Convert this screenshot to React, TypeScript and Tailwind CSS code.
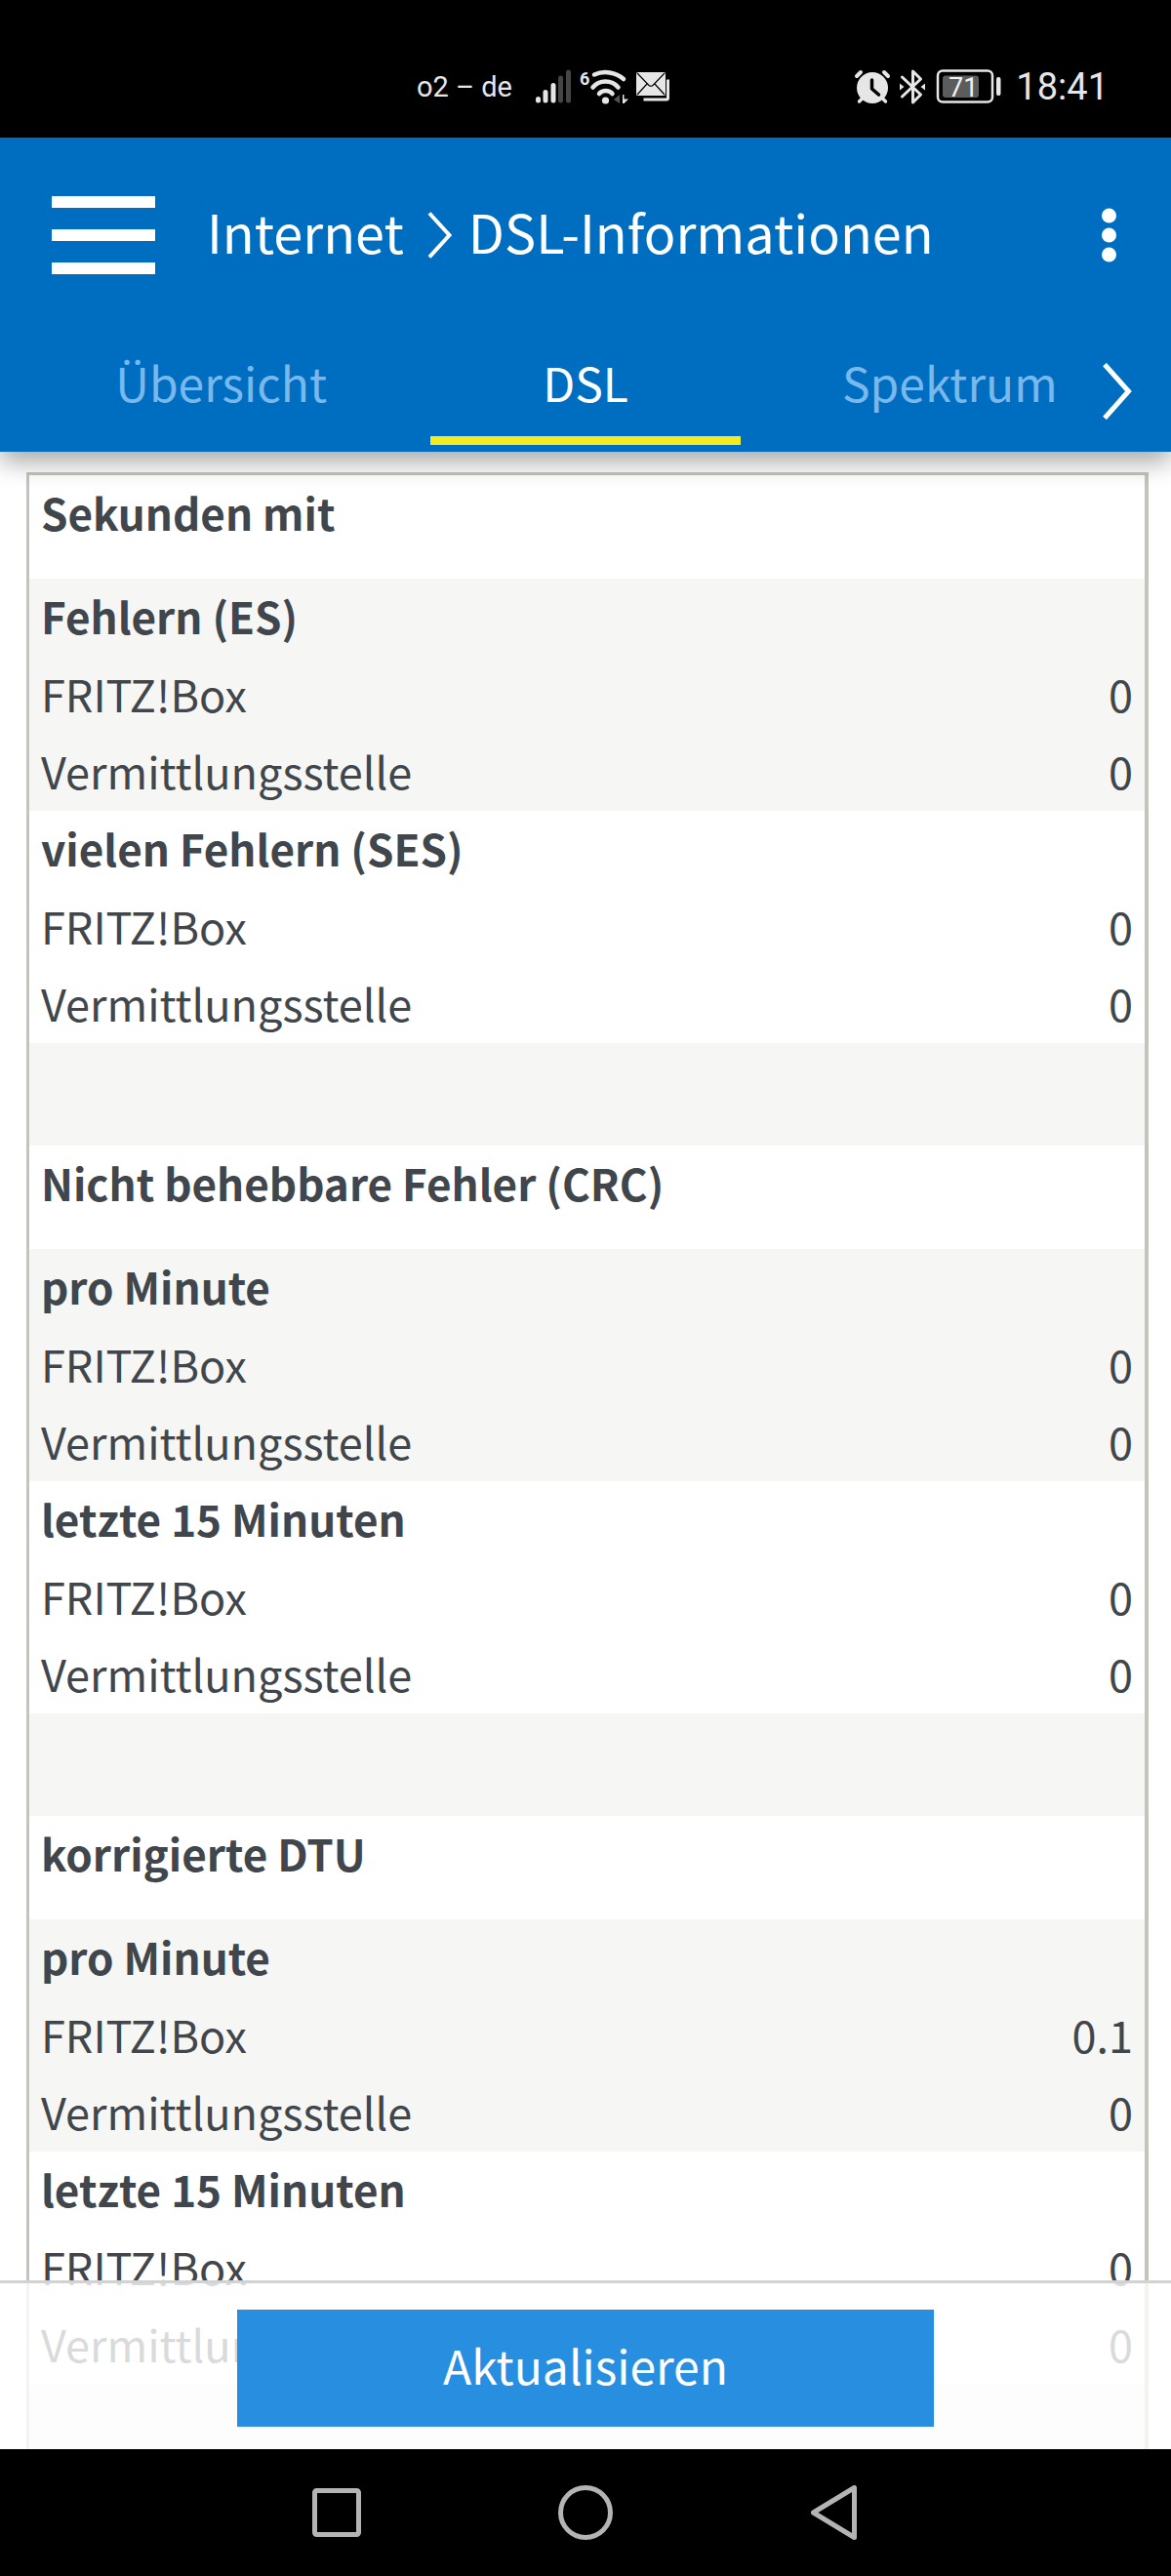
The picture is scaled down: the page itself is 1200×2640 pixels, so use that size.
import React from 'react';

const sections = [
  {
    title: 'Sekunden mit',
    groups: [
      { name: 'Fehlern (ES)', box: '0', exchange: '0' },
      { name: 'vielen Fehlern (SES)', box: '0', exchange: '0' },
    ],
  },
  {
    title: 'Nicht behebbare Fehler (CRC)',
    groups: [
      { name: 'pro Minute', box: '0', exchange: '0' },
      { name: 'letzte 15 Minuten', box: '0', exchange: '0' },
    ],
  },
  {
    title: 'korrigierte DTU',
    groups: [
      { name: 'pro Minute', box: '0.1', exchange: '0' },
      { name: 'letzte 15 Minuten', box: '0', exchange: '0' },
    ],
  },
];

const tabs = ['Übersicht', 'DSL', 'Spektrum'];

function StatusBar() {
  return (
    <div className="flex h-[141px] shrink-0 items-center justify-between bg-black pt-[37px] pr-16 pl-[427px] font-['Roboto',sans-serif] text-[#e6e6e6]">
      <div className="flex items-center">
        <span className="w-[121px] text-[29px] leading-[38px]">o2 – de</span>
        {/* signal strength */}
        <svg viewBox="0 0 38 38" className="mr-2 h-[38px] w-[38px]" strokeWidth="5" strokeLinecap="round">
          <g stroke="#e6e6e6">
            <path d="M3.5 31.5V33" />
            <path d="M11 24.5V33" />
            <path d="M19 17.5V33" />
          </g>
          <g stroke="#454545">
            <path d="M26.5 10V33" />
            <path d="M34.5 4V33" />
          </g>
        </svg>
        {/* wifi 6 */}
        <svg viewBox="0 0 51 38" className="mr-1.5 h-[38px] w-[51px] overflow-visible" fill="none">
          <text x="0" y="17" fill="#e6e6e6" fontSize="18" fontWeight="700" fontFamily="Roboto, sans-serif">
            6
          </text>
          <g stroke="#e6e6e6" strokeWidth="4.5" strokeLinecap="round">
            <path d="M15 6.500C25 2 37 4 45 11" />
            <path d="M13.500 19.500C20 11.500 33 11.500 39.500 19.500" />
            <path d="M20 26C23.500 22 30 22 33.500 26" />
          </g>
          <circle cx="26.500" cy="33" r="3.600" fill="#e6e6e6" />
          <path d="M41 27v9l-6-4z" fill="#555" />
          <path d="M44 27h1.500v4.500H50L45.500 36H44z" fill="#e6e6e6" />
        </svg>
        {/* mail */}
        <svg viewBox="0 0 37 38" className="h-[38px] w-[37px]" fill="none">
          <path d="M33.500 11.500V30.500Q33.500 32 32 32H8.500" stroke="#e6e6e6" strokeWidth="3" />
          <rect x="1" y="4" width="30" height="24" rx="1.500" fill="#e6e6e6" />
          <path d="M2 5L14 17.500Q16 19 18 17.500L30 5M2 27L12 16M30 27L20 16" stroke="#000" strokeWidth="1.200" />
        </svg>
      </div>
      <div className="flex items-center">
        {/* alarm */}
        <svg viewBox="0 0 38 38" className="mr-2 h-[38px] w-[38px]" fill="none" strokeLinecap="round">
          <circle cx="19" cy="20" r="16" fill="#e6e6e6" />
          <path d="M3 8L7 4M31 4L35 8" stroke="#e6e6e6" strokeWidth="4" />
          <path d="M5.500 34L9 30.500M32.500 34L29 30.500" stroke="#e6e6e6" strokeWidth="3.500" />
          <path d="M18.500 12V21L25.500 27" stroke="#000" strokeWidth="3.500" strokeLinejoin="round" />
        </svg>
        {/* bluetooth */}
        <svg viewBox="0 0 28 38" className="mr-2.5 h-[38px] w-[28px]" fill="none">
          <path
            d="M3.500 9L22.500 27L14.500 35V3L22.500 11L3.500 29"
            stroke="#e6e6e6"
            strokeWidth="3"
            strokeLinecap="round"
            strokeLinejoin="round"
          />
          <path d="M1 15.500L5.500 19L1 22.500zM27 15.500L22.500 19L27 22.500z" fill="#e6e6e6" />
        </svg>
        {/* battery */}
        <svg viewBox="0 0 68 38" className="mr-3.5 h-[38px] w-[68px]">
          <rect x="2" y="2.500" width="56" height="32" rx="5" fill="none" stroke="#e6e6e6" strokeWidth="2.500" />
          <rect x="7" y="7.500" width="37" height="22.500" rx="3" fill="#5c5c5c" />
          <rect x="62" y="9" width="4.500" height="19" rx="2" fill="#e6e6e6" />
          <text x="13" y="29" fill="#f2f2f2" fontSize="27" fontFamily="Roboto, sans-serif">
            71
          </text>
        </svg>
        <time className="text-[38px] leading-[38px]">18:41</time>
      </div>
    </div>
  );
}

function Header() {
  return (
    <header className="relative z-10 shrink-0 bg-[#006ec0] text-white shadow-[0_10px_24px_rgba(0,0,0,0.35)]">
      <div className="flex h-[200px] items-center pr-[48px] pl-[53px]">
        <button type="button" aria-label="Menü" className="flex w-[106px] flex-col gap-[22px]">
          <span className="h-3 bg-white"></span>
          <span className="h-3 bg-white"></span>
          <span className="h-3 bg-white"></span>
        </button>
        <h1 className="ml-[53px] flex items-center text-[54px] leading-[80px]">
          <a href="#internet" className="pb-2">
            Internet
          </a>
          <svg viewBox="0 0 26 48" className="mr-4 ml-6 h-[48px] w-[26px]" fill="none">
            <path d="M2 1.500L22.500 24L2 46.500" stroke="#fff" strokeWidth="4" />
          </svg>
          <span className="pb-2">DSL-Informationen</span>
        </h1>
        <button type="button" aria-label="Mehr" className="ml-auto px-2">
          <svg viewBox="0 0 15 56" className="h-[56px] w-[15px]" fill="#fff">
            <circle cx="7.500" cy="8" r="7.500" />
            <circle cx="7.500" cy="28" r="7.500" />
            <circle cx="7.500" cy="48" r="7.500" />
          </svg>
        </button>
      </div>
      <nav className="relative grid grid-cols-3 px-10 pb-[7px] text-[48px] leading-[100px]">
        {tabs.map((tab) => (
          <a key={tab} href={`#${tab}`} className="group px-7 text-center" aria-current={tab === 'DSL'}>
            <span className={tab === 'DSL' ? 'text-white' : 'text-[#78b8ec]'}>{tab}</span>
            <span className="mt-[6px] block h-[9px] group-aria-[current=true]:bg-[#f4ec1c]"></span>
          </a>
        ))}
        <button type="button" aria-label="Weitere Tabs" className="absolute top-[31px] right-10">
          <svg viewBox="0 0 30 58" className="h-[58px] w-[30px]" fill="none">
            <path d="M2 1.500L26.500 29L2 56.500" stroke="#fff" strokeWidth="5" />
          </svg>
        </button>
      </nav>
    </header>
  );
}

function DslTable() {
  return (
    <table className="w-full border-separate border-spacing-0 border-3 border-r-4 border-[#c4c4bc] text-[45px] leading-[75px] text-[#40464b]">
      {sections.map((section) => (
        <React.Fragment key={section.title}>
          <tbody>
            <tr>
              <th colSpan={2} className="px-3 pb-[29px] text-left text-[44px] leading-[77px] font-bold">
                {section.title}
              </th>
            </tr>
          </tbody>
          {section.groups.map((group) => (
            <tbody key={group.name} className="odd:bg-white even:bg-[#f6f6f4]">
              <tr>
                <th colSpan={2} className="px-3 pb-[3px] text-left text-[44px] leading-[77px] font-bold">
                  {group.name}
                </th>
              </tr>
              <tr>
                <td className="px-3 pb-1">FRITZ!Box</td>
                <td className="px-3 pb-1 text-right">{group.box}</td>
              </tr>
              <tr>
                <td className="px-3 pb-1">Vermittlungsstelle</td>
                <td className="px-3 pb-1 text-right">{group.exchange}</td>
              </tr>
            </tbody>
          ))}
          <tbody className="bg-[#f6f6f4]">
            <tr>
              <td colSpan={2} className="h-[105px]"></td>
            </tr>
          </tbody>
        </React.Fragment>
      ))}
    </table>
  );
}

export default function App() {
  return (
    <div className="flex h-screen flex-col bg-white font-['Noto_Sans_CJK_SC',sans-serif]">
      <StatusBar />
      <Header />
      <div className="relative min-h-0 flex-1">
        <main className="h-full overflow-hidden pt-[21px] pr-[23px] pl-[27px]">
          <DslTable />
        </main>
        <div className="absolute inset-x-0 bottom-0 border-t-3 border-[#d2d2d2] bg-white/80 bg-clip-padding pt-[27px] pb-[23px] text-center">
          <button type="button" className="h-[120px] w-[59.5%] bg-[#288ee0] pb-2 text-[48px] leading-[80px] text-white">
            Aktualisieren
          </button>
        </div>
      </div>
      <nav className="flex h-[130px] shrink-0 items-center justify-center gap-[199px] bg-black">
        <button type="button" aria-label="Letzte Apps">
          <svg viewBox="0 0 56 56" className="h-[56px] w-[56px]" fill="none" stroke="#b4b4b4" strokeWidth="5">
            <rect x="5.500" y="5.500" width="45" height="45" rx="2" />
          </svg>
        </button>
        <button type="button" aria-label="Startbildschirm">
          <svg viewBox="0 0 56 56" className="h-[56px] w-[56px]" fill="none" stroke="#b4b4b4" strokeWidth="5">
            <circle cx="28" cy="28" r="25.500" />
          </svg>
        </button>
        <button type="button" aria-label="Zurück">
          <svg
            viewBox="0 0 56 56"
            className="h-[56px] w-[56px]"
            fill="none"
            stroke="#b4b4b4"
            strokeWidth="5"
            strokeLinejoin="round"
          >
            <path d="M48.500 2.500V53.500L6.500 28z" />
          </svg>
        </button>
      </nav>
    </div>
  );
}
